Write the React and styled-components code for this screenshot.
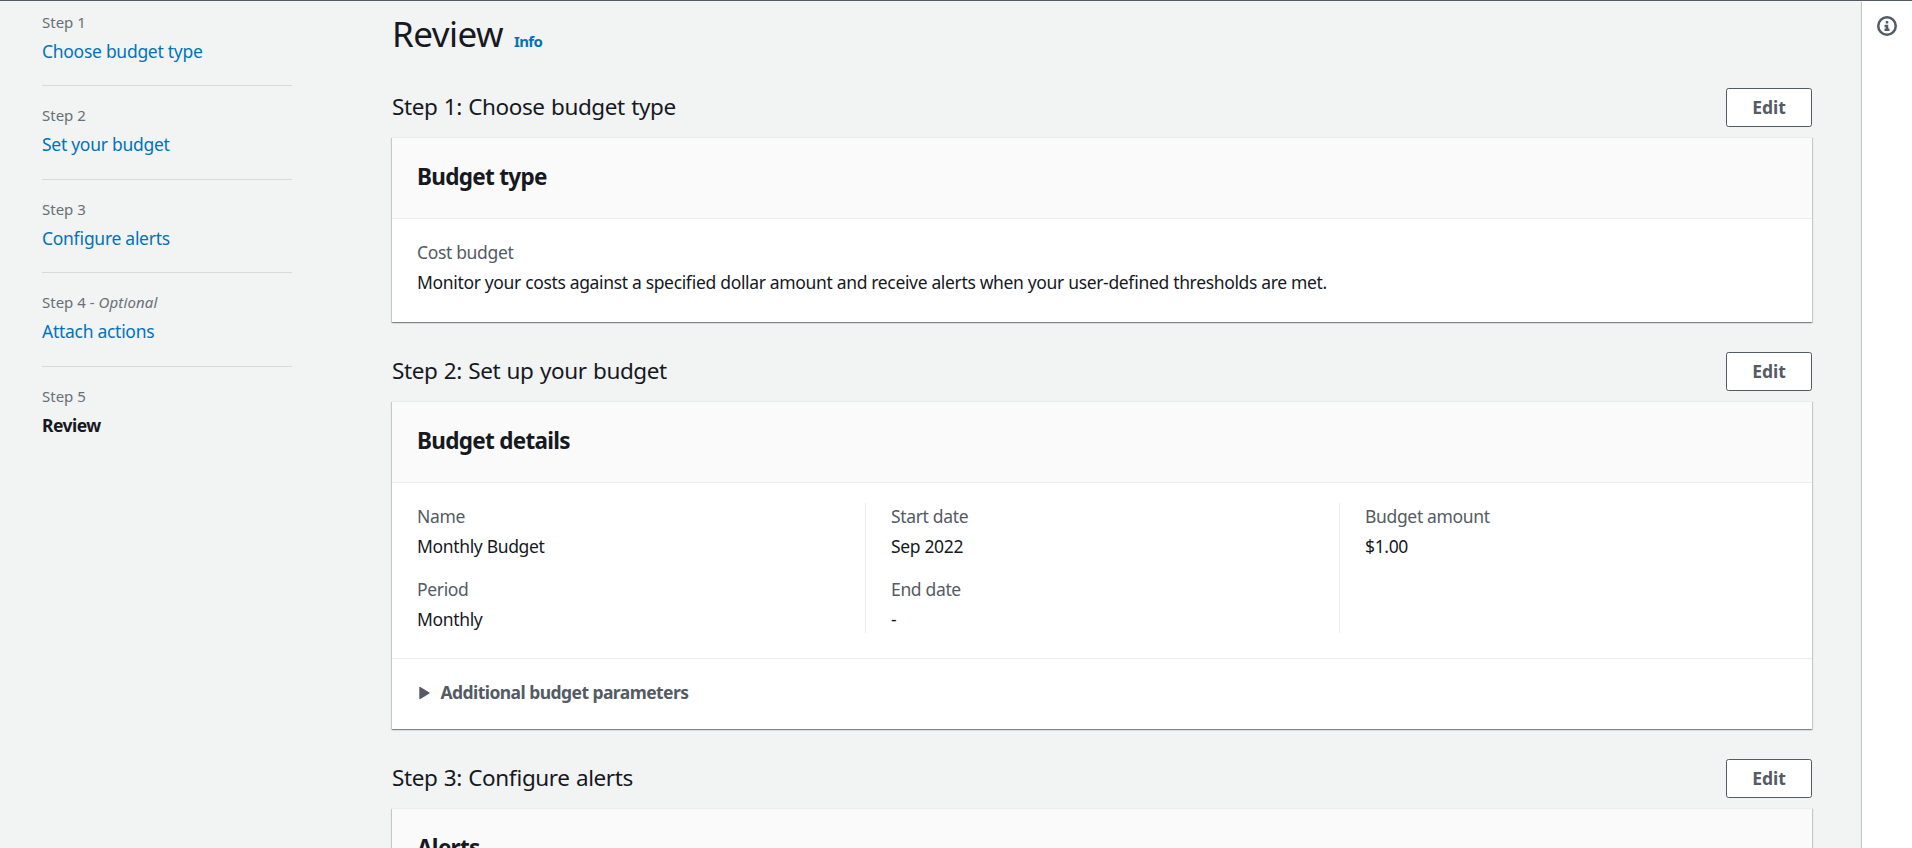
import React from 'react';
import styled, { createGlobalStyle } from 'styled-components';

const GlobalStyle = createGlobalStyle`
  *, *::before, *::after { box-sizing: border-box; }
  body {
    margin: 0;
    background: #f2f3f3;
    color: #16191f;
    font-family: "Noto Sans", "Open Sans", sans-serif;
    font-size: 17.5px;
    line-height: 27.5px;
    letter-spacing: -0.0195em;
    font-feature-settings: "liga" 1;
  }
  h1, h2, h3, p, ol, dl, dt, dd { margin: 0; padding: 0; font-weight: 400; }
  ol { list-style: none; }
`;

const Page = styled.div`
  height: 848px;
  display: flex;
  overflow: hidden;
  border-top: 1px solid #545b64;
`;

const Steps = styled.ol`
  flex: none;
  width: 250px;
  margin: 10.5px 100px 0 42px;
`;

const Step = styled.li`
  display: flex;
  flex-direction: column;
  gap: 6px;
  padding-bottom: 20px;
  & + & {
    border-top: 1px solid #d5dbdb;
    padding-top: 19px;
  }
`;

const StepLabel = styled.span`
  font-size: 15px;
  line-height: 20px;
  letter-spacing: 0;
  color: #687078;
  em { letter-spacing: 0.01em; }
`;

const StepLink = styled.a`
  color: #0073bb;
  text-decoration: none;
  letter-spacing: -0.016em;
  cursor: pointer;
`;

const CurrentStep = styled.span`
  font-weight: 700;
  letter-spacing: -0.03em;
`;

const Main = styled.main`
  flex: 1;
  padding-top: 10px;
`;

const TitleRow = styled.div`
  display: flex;
  align-items: baseline;
  gap: 11px;
  height: 45px;
  margin-bottom: 32px;
`;

const Title = styled.h1`
  font-size: 35px;
  line-height: 45px;
  letter-spacing: -0.015em;
`;

const InfoLink = styled.a`
  font-size: 15px;
  line-height: 20px;
  font-weight: 700;
  letter-spacing: -0.045em;
  color: #0073bb;
`;

const Section = styled.section`
  margin-bottom: 30px;
`;

const SectionHeader = styled.div`
  display: flex;
  justify-content: space-between;
  align-items: center;
  margin-bottom: 10px;
`;

const SectionTitle = styled.h2`
  font-size: 22.5px;
  letter-spacing: -0.0185em;
  word-spacing: 1px;
  padding-bottom: 1.5px;
`;

const Button = styled.button`
  width: 86px;
  height: 39px;
  padding: 0;
  border: 1px solid #545b64;
  border-radius: 2.5px;
  background: #fff;
  color: #545b64;
  font: inherit;
  font-weight: 700;
  letter-spacing: 0;
`;

const Card = styled.div`
  background: #fff;
  border-top: 1px solid #eaeded;
  box-shadow:
    0 1px 1px 0 rgba(0, 28, 36, 0.3),
    1px 1px 1px 0 rgba(0, 28, 36, 0.15),
    -1px 1px 1px 0 rgba(0, 28, 36, 0.15);
`;

const CardHeader = styled.div`
  height: 81px;
  padding: 25px 25px 0;
  background: #fafafa;
  border-bottom: 1px solid #eaeded;
`;

const CardTitle = styled.h3`
  font-size: 22.5px;
  font-weight: 700;
  letter-spacing: -0.031em;
`;

const CardBody = styled.div`
  min-height: 103px;
  padding: 20px 0 25px;
`;

const Columns = styled.div`
  display: grid;
  grid-template-columns: 448px 474px 1fr;
  margin-left: 25px;
`;

const Column = styled.dl`
  display: flex;
  flex-direction: column;
  gap: 15px;
  & + & {
    border-left: 1px solid #eaeded;
    padding-left: 25px;
  }
`;

const Summary = styled.dl`
  padding: 0 25px;
`;

const Field = styled.div`
  display: flex;
  flex-direction: column;
  gap: 2.5px;
`;

const FieldLabel = styled.dt`
  color: #545b64;
`;

const FieldValue = styled.dd``;

const CardFooter = styled.div`
  display: flex;
  align-items: center;
  gap: 10.5px;
  padding: 20px 26px 22.5px 27px;
  border-top: 1px solid #eaeded;
  color: #545b64;
  font-weight: 700;
  letter-spacing: -0.032em;
`;

const HelpPanel = styled.aside`
  flex: none;
  width: 50px;
  margin-left: 50px;
  padding: 15px 0 0 15px;
  background: #fff;
  box-shadow:
    0 1px 1px 0 rgba(0, 28, 36, 0.3),
    1px 1px 1px 0 rgba(0, 28, 36, 0.15),
    -1px 1px 1px 0 rgba(0, 28, 36, 0.15);
  svg { display: block; }
`;

const InfoIcon = () => (
  <svg width="20" height="20" viewBox="0 0 16 16" fill="none" stroke="#545b64" strokeWidth="2">
    <circle cx="8" cy="8" r="7" />
    <path d="M8 11V8H6M10 11H6M8 6V4" />
  </svg>
);

const Caret = () => (
  <svg width="11" height="14" viewBox="0 0 11 14">
    <path d="M1 1.5L10 7L1 12.5Z" fill="#545b64" stroke="#545b64" strokeWidth="1.4" strokeLinejoin="round" />
  </svg>
);

const steps = [
  { label: 'Step 1', name: 'Choose budget type' },
  { label: 'Step 2', name: 'Set your budget' },
  { label: 'Step 3', name: 'Configure alerts' },
  { label: 'Step 4', name: 'Attach actions', optional: true },
  { label: 'Step 5', name: 'Review', current: true },
];

const details = [
  [['Name', 'Monthly Budget'], ['Period', 'Monthly']],
  [['Start date', 'Sep 2022'], ['End date', '-']],
  [['Budget amount', '$1.00']],
];

const ReviewSection = ({ title, cardTitle, children }) => (
  <Section>
    <SectionHeader>
      <SectionTitle>{title}</SectionTitle>
      <Button>Edit</Button>
    </SectionHeader>
    <Card>
      <CardHeader>
        <CardTitle>{cardTitle}</CardTitle>
      </CardHeader>
      {children}
    </Card>
  </Section>
);

const LabeledValue = ({ label, value }) => (
  <Field>
    <FieldLabel>{label}</FieldLabel>
    <FieldValue>{value}</FieldValue>
  </Field>
);

export default function App() {
  return (
    <>
      <GlobalStyle />
      <Page>
        <Steps>
          {steps.map((s) => (
            <Step key={s.label}>
              <StepLabel>
                {s.label}
                {s.optional && <> - <em>Optional</em></>}
              </StepLabel>
              {s.current ? <CurrentStep>{s.name}</CurrentStep> : <StepLink>{s.name}</StepLink>}
            </Step>
          ))}
        </Steps>
        <Main>
          <TitleRow>
            <Title>Review</Title>
            <InfoLink>Info</InfoLink>
          </TitleRow>
          <ReviewSection title="Step 1: Choose budget type" cardTitle="Budget type">
            <CardBody>
              <Summary>
                <LabeledValue
                  label="Cost budget"
                  value="Monitor your costs against a specified dollar amount and receive alerts when your user-defined thresholds are met."
                />
              </Summary>
            </CardBody>
          </ReviewSection>
          <ReviewSection title="Step 2: Set up your budget" cardTitle="Budget details">
            <CardBody>
              <Columns>
                {details.map((column) => (
                  <Column key={column[0][0]}>
                    {column.map(([label, value]) => (
                      <LabeledValue key={label} label={label} value={value} />
                    ))}
                  </Column>
                ))}
              </Columns>
            </CardBody>
            <CardFooter>
              <Caret />
              Additional budget parameters
            </CardFooter>
          </ReviewSection>
          <ReviewSection title="Step 3: Configure alerts" cardTitle="Alerts" />
        </Main>
        <HelpPanel>
          <InfoIcon />
        </HelpPanel>
      </Page>
    </>
  );
}
